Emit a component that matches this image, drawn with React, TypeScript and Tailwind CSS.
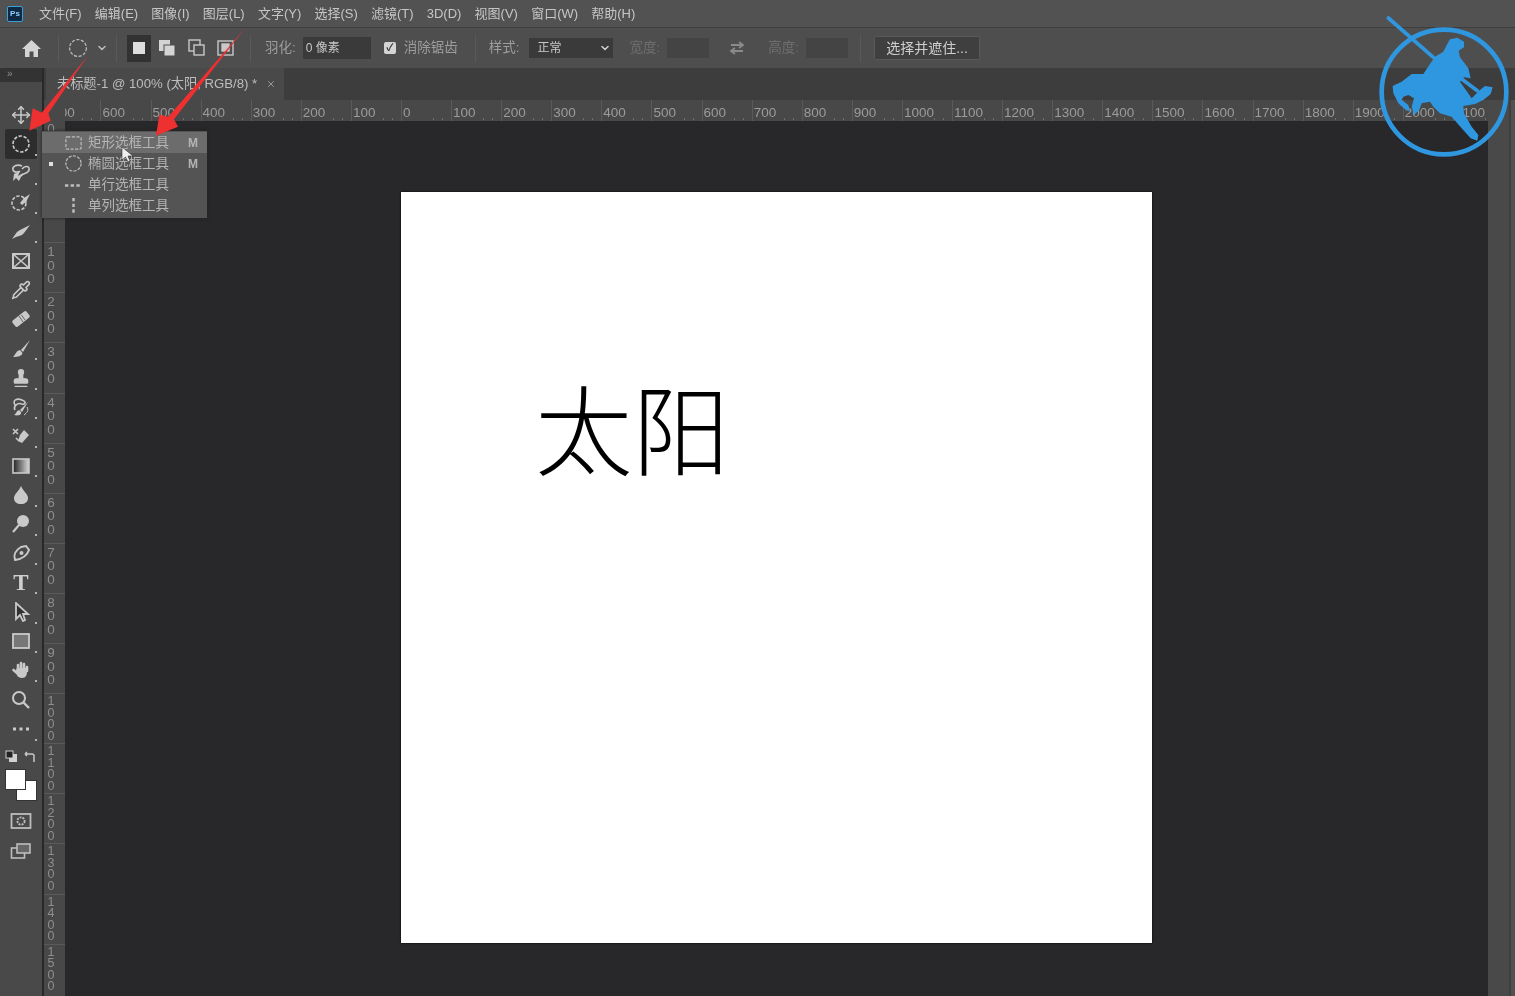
import { ChevronDown, Move, Pipette, Stamp, X } from 'lucide-react'

const MENUS = ['文件(F)', '编辑(E)', '图像(I)', '图层(L)', '文字(Y)', '选择(S)', '滤镜(T)', '3D(D)', '视图(V)', '窗口(W)', '帮助(H)']
const H_LABELS = [700, 600, 500, 400, 300, 200, 100, 0, 100, 200, 300, 400, 500, 600, 700, 800, 900, 1000, 1100, 1200, 1300, 1400, 1500, 1600, 1700, 1800, 1900, 2000, 2100]
const V_LABELS = [200, 100, 0, 100, 200, 300, 400, 500, 600, 700, 800, 900, 1000, 1100, 1200, 1300, 1400, 1500]

const C = '#c9c9c9'

function Svg({ children, size = 20 }: { children: React.ReactNode; size?: number }) {
  return (
    <svg width={size} height={size} viewBox="0 0 20 20" fill="none" stroke={C} strokeWidth="1.6">
      {children}
    </svg>
  )
}

const TOOLS: { key: string; icon: React.ReactNode; corner?: boolean; selected?: boolean }[] = [
  { key: 'move', corner: false, icon: <Move size={20} color={C} strokeWidth={1.8} /> },
  { key: 'ellipse', selected: true, corner: true, icon: <Svg><circle cx="10" cy="10" r="8" strokeDasharray="3.4 1.6" /></Svg> },
  {
    key: 'lasso',
    corner: true,
    icon: (
      <Svg>
        <path d="M11 3 C6 1 1 3 2 7 C3 10 8 9 9 8" />
        <path d="M3 11 L9 8 L7 13 L12 10 L8 18 L5 15 L2 18 Z" fill={C} stroke="none" />
        <path d="M11 6 C14 2 19 3 18 7 C17 11 12 10 10 13" />
      </Svg>
    ),
  },
  {
    key: 'quick',
    corner: true,
    icon: (
      <Svg>
        <circle cx="8" cy="11" r="7" strokeDasharray="3.4 1.6" />
        <path d="M19 2 L13 6 L9 11 L11 13 L15 10 Z" fill={C} stroke="none" />
      </Svg>
    ),
  },
  { key: 'crop', corner: true, icon: <Svg><path d="M1 17 L6 10 L9 8 L19 3 L13 11 L11 13 L5 15 Z" fill={C} stroke="none" /></Svg> },
  { key: 'frame', icon: <Svg><rect x="2" y="3" width="16" height="14" strokeWidth="2" /><path d="M2 3 L18 17 M18 3 L2 17" /></Svg> },
  { key: 'picker', corner: true, icon: <Pipette size={20} color={C} strokeWidth={2} /> },
  {
    key: 'heal',
    corner: true,
    icon: (
      <Svg>
        <rect x="6" y="1" width="8" height="18" rx="2" transform="rotate(52 10 10)" fill={C} stroke="none" />
        <path d="M8 7 L12 13 M10.5 6 L14 11" stroke="#666" strokeWidth="1" />
      </Svg>
    ),
  },
  { key: 'brush', corner: true, icon: <Svg><path d="M19 1 L10 11 L12 13 Z" fill={C} stroke="none" /><path d="M9 11 C5 12 5 15 2 18 C7 18 11 17 11.5 14 Z" fill={C} stroke="none" /></Svg> },
  { key: 'stamp', corner: true, icon: <Stamp size={20} color={C} fill={C} strokeWidth={1.6} /> },
  {
    key: 'history',
    corner: true,
    icon: (
      <Svg>
        <path d="M4 8 C1 3 6 1 11 3 C16 5 14 8 11 7 C6 5 2 10 4 13" />
        <path d="M17 5 L9 13 L11 15 Z" fill={C} stroke="none" />
        <path d="M8 13 C5 14 6 16 3 18 C7 19 11 18 10 15 Z" fill={C} stroke="none" />
        <path d="M16 10 C18 13 16 16 13 18" strokeWidth="1" />
      </Svg>
    ),
  },
  {
    key: 'eraser',
    corner: true,
    icon: (
      <Svg>
        <path d="M2 3 L7 8 M7 3 L2 8" />
        <path d="M9 9 L13 4 L18 9 L11 17 L7 15 Z" fill={C} stroke="none" />
        <path d="M5 12 L8 15" />
      </Svg>
    ),
  },
  {
    key: 'gradient',
    corner: true,
    icon: (
      <svg width="20" height="20" viewBox="0 0 20 20">
        <defs>
          <linearGradient id="grad">
            <stop offset="0" stopColor="#222" />
            <stop offset="1" stopColor="#d8d8d8" />
          </linearGradient>
        </defs>
        <rect x="2" y="3" width="16" height="14" fill="url(#grad)" stroke={C} strokeWidth="1.6" />
      </svg>
    ),
  },
  { key: 'drop', corner: true, icon: <Svg><path d="M10 1 C8 6 3 9 3 13 C3 17 6 19 10 19 C14 19 17 17 17 13 C17 9 12 6 10 1 Z" fill={C} stroke="none" /></Svg> },
  { key: 'dodge', corner: true, icon: <Svg><circle cx="12" cy="7" r="6" fill={C} stroke="none" /><path d="M8 11 L2 18" strokeWidth="2.2" /></Svg> },
  {
    key: 'pen',
    corner: true,
    icon: (
      <Svg>
        <path d="M4 17 C2 12 5 7 10 4 L15 3 L18 7 C16 13 11 16 4 17 Z" strokeWidth="2" />
        <circle cx="10.5" cy="10" r="2" fill={C} stroke="none" />
      </Svg>
    ),
  },
  { key: 'type', corner: true, icon: <span className="font-['Liberation_Serif',serif] text-[23px] font-bold leading-none text-[#cfcfcf]">T</span> },
  { key: 'path', corner: true, icon: <Svg><path d="M5 1 L5 17 L9 13 L12 19 L14 18 L12 12 L17 12 Z" fill="#333" stroke={C} strokeWidth="1.8" /></Svg> },
  { key: 'rect', corner: true, icon: <Svg><rect x="2" y="3" width="16" height="14" fill="#777" strokeWidth="1.8" /></Svg> },
  {
    key: 'hand',
    corner: true,
    icon: (
      <Svg>
        <path d="M5 10 C5 14 6 18 11 18 C15 18 16 15 16 11 V8 H6 Z" fill={C} stroke="none" />
        <path d="M7 10 V5 M10 9 V3 M13 10 V4 M16 11 V7 M6 13 L2.5 10" strokeWidth="2.6" strokeLinecap="round" />
      </Svg>
    ),
  },
  { key: 'zoom', icon: <Svg><circle cx="8" cy="8" r="6" strokeWidth="2" /><path d="M12.5 12.5 L18 18" strokeWidth="2.4" /></Svg> },
  { key: 'more', corner: true, icon: <Svg><path d="M2 10 H5 M8.5 10 H11.5 M15 10 H18" strokeWidth="3" /></Svg> },
]

const FLYOUT = [
  { label: '矩形选框工具', key: 'M', active: true, icon: <rect x="2" y="4" width="16" height="13" rx="1.5" strokeDasharray="3.2 1.6" /> },
  { label: '椭圆选框工具', key: 'M', bullet: true, icon: <circle cx="10" cy="10" r="8" strokeDasharray="3.2 1.4" /> },
  { label: '单行选框工具', icon: <path d="M1 10 H19" strokeWidth="2.6" strokeDasharray="3.6 2.4" /> },
  { label: '单列选框工具', icon: <path d="M10 1 V19" strokeWidth="2.6" strokeDasharray="3.6 2.4" /> },
]

function Tool({ icon, corner, selected }: { icon: React.ReactNode; corner?: boolean; selected?: boolean }) {
  return (
    <div className={`relative mx-[5px] flex h-[29.25px] items-center justify-center ${selected ? 'rounded-[2px] bg-[#2d2d2e]' : ''}`}>
      {icon}
      {corner && <span className="absolute bottom-[3px] right-[0px] h-[2px] w-[2px] bg-[#b5b5b5]" />}
    </div>
  )
}

function Sep({ ml }: { ml: string }) {
  return <div className={`h-[27px] w-px bg-[#5a595a] ${ml}`} />
}

function HRuler() {
  return (
    <div className="h-full min-w-0 flex-1 overflow-hidden">
      <div className="-ml-[14.7px] flex h-full">
        {H_LABELS.map((n, i) => (
          <div key={i} className="flex h-full w-[50.1px] shrink-0 items-end border-l border-[#5b5a5b] pl-[1px] text-[13.5px] leading-[17px] text-[#9b9b9b]">
            <span>{n}</span>
            <span className="mb-[1px] ml-auto mr-[8px] h-[2px] w-px bg-[#6f6f6f]" />
            <span className="mb-[1px] mr-[8px] h-[2px] w-px bg-[#6f6f6f]" />
          </div>
        ))}
      </div>
    </div>
  )
}

function VRuler() {
  return (
    <div className="h-full w-[21px] shrink-0 overflow-hidden bg-[#484848]">
      <div className="-mt-[29px]">
        {V_LABELS.map((n, i) => (
          <div key={i} className="h-[50.1px] border-t border-[#5b5a5b] pt-[2px]">
            <div className={`flex w-[14px] flex-col items-center text-[#8e8e8e] ${n >= 1000 ? 'text-[12.5px]' : 'text-[13.5px]'}`}>
              {String(n)
                .split('')
                .map((d, j) => (
                  <span key={j} className={n >= 1000 ? 'h-[11.5px] leading-[11.5px]' : 'h-[13.5px] leading-[13.5px]'}>
                    {d}
                  </span>
                ))}
            </div>
          </div>
        ))}
      </div>
    </div>
  )
}

function Flyout() {
  return (
    <div className="absolute left-[42px] top-[131px] w-[165px] bg-[#555455] py-[1px] shadow-[0_0_3px_#222]">
      {FLYOUT.map((it) => (
        <div key={it.label} className={`relative flex h-[21.3px] items-center text-[13.5px] text-[#b4b4b4] ${it.active ? 'bg-[#6c6c6c]' : ''}`}>
          {it.bullet && <span className="absolute left-[7px] h-[4px] w-[4px] bg-[#e0e0e0]" />}
          <svg className="ml-[22px] shrink-0" width="19" height="19" viewBox="0 0 20 20" fill="none" stroke="#bdbdbd" strokeWidth="1.3">
            {it.icon}
          </svg>
          <span className="ml-[5px]">{it.label}</span>
          {it.key && <span className="ml-auto mr-[9px] text-[12px] font-bold">{it.key}</span>}
        </div>
      ))}
    </div>
  )
}

export default function App() {
  return (
    <div className="relative flex h-[996px] w-[1515px] flex-col overflow-hidden bg-[#28282a] font-['Liberation_Sans','Noto_Sans_CJK_SC',sans-serif] blur-[0.6px]">
      {/* menu bar */}
      <div className="flex h-[28px] shrink-0 items-center border-b border-[#403f40] bg-[#535253] text-[13px] text-[#c6c6c6]">
        <div className="ml-[7px] flex h-[16px] w-[16px] items-center justify-center rounded-[2px] border border-[#3aa0d8] bg-[#0f2a44] text-[8px] font-bold text-[#8fd0f5]">Ps</div>
        <div className="ml-[16px] flex gap-[13.2px]">
          {MENUS.map((m) => (
            <span key={m}>{m}</span>
          ))}
        </div>
      </div>

      {/* options bar */}
      <div className="flex h-[40px] shrink-0 items-center bg-[#4f4e4f] text-[13.5px] text-[#9d9d9d]">
        <svg className="ml-[22px]" width="19" height="19" viewBox="0 0 19 19" fill="#d4d4d4">
          <path d="M9.5 1 L19 10 H16 V18 H11.5 V12.5 H7.5 V18 H3 V10 H0 Z" />
        </svg>
        <Sep ml="ml-[17px]" />
        <svg className="ml-[9px]" width="20" height="20" viewBox="0 0 20 20" fill="none" stroke="#bdbdbd" strokeWidth="1.2">
          <circle cx="10" cy="10" r="8.4" strokeDasharray="3.2 1.5" />
        </svg>
        <ChevronDown className="ml-[8px]" size={12} color="#bdbdbd" strokeWidth={3} />
        <Sep ml="ml-[8px]" />
        <div className="ml-[10px] flex h-[27px] w-[24px] items-center justify-center bg-[#323233]">
          <div className="h-[12px] w-[12px] bg-[#dddddd]" />
        </div>
        <svg className="ml-[7px]" width="18" height="18" viewBox="0 0 18 18">
          <rect x="1" y="1" width="11" height="11" fill="#d4d4d4" />
          <rect x="6" y="6" width="11" height="11" fill="#d4d4d4" stroke="#4f4e4f" />
        </svg>
        <svg className="ml-[12px]" width="18" height="18" viewBox="0 0 18 18" fill="none" stroke="#c8c8c8" strokeWidth="1.4">
          <rect x="1" y="1" width="11" height="11" />
          <rect x="6" y="6" width="10" height="10" fill="#4f4e4f" />
        </svg>
        <svg className="ml-[11px]" width="18" height="18" viewBox="0 0 18 18" fill="none" stroke="#c8c8c8" strokeWidth="1.4">
          <rect x="1" y="2" width="15" height="14" />
          <rect x="5" y="5" width="7" height="7" fill="#c8c8c8" />
        </svg>
        <Sep ml="ml-[15px]" />
        <span className="ml-[14px]">羽化:</span>
        <div className="ml-[7px] flex h-[22px] w-[68px] items-center bg-[#3b3a3b] pl-[3px] text-[12px] text-[#c8c8c8]">0 像素</div>
        <div className="ml-[13px] flex h-[12px] w-[12px] items-center justify-center rounded-[2px] bg-[#d4d4d4] text-[10px] font-bold leading-none text-[#333]">✓</div>
        <span className="ml-[8px]">消除锯齿</span>
        <Sep ml="ml-[17px]" />
        <span className="ml-[13px]">样式:</span>
        <div className="ml-[9px] flex h-[20px] w-[84px] items-center justify-between bg-[#3b3a3b] pl-[9px] pr-[2px] text-[12px] text-[#c8c8c8]">
          正常
          <ChevronDown size={12} color="#d0d0d0" strokeWidth={3} />
        </div>
        <span className="ml-[17px] text-[#6f6e6f]">宽度:</span>
        <div className="ml-[7px] h-[20px] w-[42px] bg-[#454445]" />
        <svg className="ml-[20px]" width="16" height="16" viewBox="0 0 16 16" fill="none" stroke="#8a8a8a" strokeWidth="1.8">
          <path d="M2 5 H13 M10 2 L14 5 L10 8 M14 11 H3 M6 8 L2 11 L6 14" />
        </svg>
        <span className="ml-[23px] text-[#6f6e6f]">高度:</span>
        <div className="ml-[7px] h-[20px] w-[42px] bg-[#454445]" />
        <Sep ml="ml-[12px]" />
        <div className="ml-[13px] flex h-[24px] w-[106px] items-center justify-center rounded-[2px] border border-[#5a595a] bg-[#403f40] text-[14px] text-[#cfcfcf]">选择并遮住...</div>
      </div>

      <div className="flex min-h-0 flex-1">
        {/* toolbar */}
        <div className="flex w-[42px] shrink-0 flex-col">
          <div className="h-[14px] shrink-0 bg-[#333334] pl-[7px] text-[10px] leading-[11px] text-[#8f8f8f]">»</div>
          <div className="flex-1 bg-[#4a494a] pt-[18px]">
            {TOOLS.map((t) => (
              <Tool key={t.key} icon={t.icon} corner={t.corner} selected={t.selected} />
            ))}
            <div className="ml-[5px] mt-[6px] flex h-[14px] items-center justify-between pr-[6px]">
              <svg width="13" height="13" viewBox="0 0 13 13">
                <rect x="4" y="4" width="8" height="8" fill="#d0d0d0" />
                <rect x="1" y="1" width="7" height="7" fill="#222" stroke="#d0d0d0" />
              </svg>
              <svg width="12" height="12" viewBox="0 0 12 12" fill="none" stroke="#c8c8c8" strokeWidth="1.5">
                <path d="M1 3 H8 Q10 3 10 5 V11 M1 3 L3 1 M1 3 L3 5" />
              </svg>
            </div>
            <div className="relative ml-[5px] mt-[5px] h-[32px] w-[32px]">
              <div className="absolute bottom-0 right-0 h-[21px] w-[21px] border border-[#333] bg-white" />
              <div className="absolute left-0 top-0 h-[21px] w-[21px] border border-[#333] bg-white" />
            </div>
            <div className="mt-[5px] flex h-[30px] items-center justify-center">
              <svg width="22" height="18" viewBox="0 0 22 18" fill="none" stroke="#bdbdbd" strokeWidth="1.8">
                <rect x="1.5" y="2" width="19" height="14" />
                <circle cx="11" cy="9" r="3.6" strokeDasharray="2 1" />
              </svg>
            </div>
            <div className="flex h-[30px] items-center justify-center">
              <svg width="22" height="18" viewBox="0 0 22 18" fill="none" stroke="#bdbdbd" strokeWidth="1.6">
                <rect x="1.5" y="6" width="13" height="10" />
                <rect x="7" y="2" width="13" height="9" fill="#666" />
              </svg>
            </div>
          </div>
        </div>

        {/* document area */}
        <div className="flex min-w-0 flex-1 flex-col pl-[2px]">
          <div className="flex h-[32px] shrink-0 items-stretch bg-[#3e3d3e] pl-[2px]">
            <div className="flex w-[238px] items-center bg-[#4a494a] pl-[11px] text-[13.2px] text-[#bdbdbd]">
              未标题-1 @ 100% (太阳, RGB/8) *
              <X className="ml-[9px]" size={10} color="#a8a8a8" strokeWidth={2} />
            </div>
          </div>
          <div className="flex min-h-0 flex-1">
            <div className="flex min-w-0 flex-1 flex-col">
              <div className="flex h-[21px] shrink-0 bg-[#484848] pl-[21px]">
                <HRuler />
              </div>
              <div className="flex min-h-0 flex-1">
                <VRuler />
                <div className="flex flex-1 justify-center bg-[#28282a] pt-[71px]">
                  <div className="flex h-[751px] w-[751px] items-start bg-white pl-[134px] pt-[174px] font-['Noto_Sans_CJK_SC',serif] text-[97.5px] font-light leading-[120px] text-black shadow-[0_0_2px_#000]">
                    太阳
                  </div>
                </div>
              </div>
            </div>
            {/* collapsed panel strip */}
            <div className="flex w-[27px] shrink-0 bg-[#4a494a]">
              <div className="ml-auto w-[6px] border-l-2 border-[#403f40] bg-[#525152]" />
            </div>
          </div>
        </div>
      </div>

      <Flyout />

      {/* mouse pointer */}
      <svg className="absolute left-[121px] top-[146px]" width="14" height="18" viewBox="0 0 14 18">
        <path d="M1 1 V14 L4.5 11 L7 16 L9 15 L7 10 H12 Z" fill="#eeeeee" stroke="#333" strokeWidth="0.6" />
      </svg>

      {/* red annotation arrows */}
      <svg className="absolute left-0 top-0" width="300" height="160" viewBox="0 0 900 480">
        <path d="M265 165 L145 340 L152 362 L88 392 L98 325 L125 338 Z" fill="#ee3030" />
        <path d="M735 85 L522 358 L534 380 L468 407 L478 344 L505 350 Z" fill="#ee3030" />
      </svg>

      {/* watermark */}
      <svg className="absolute left-[1340px] top-0" width="175" height="170" viewBox="0 0 525 510">
        <circle cx="312" cy="276" r="187" fill="none" stroke="#2f97e0" strokeWidth="14" />
        <path d="M145 54 L280 172 M345 222 L412 272" fill="none" stroke="#2f97e0" strokeWidth="11" strokeLinecap="round" />
        <path
          d="M330 118 L352 113 L372 125 L372 142 L356 152 L360 172 L385 205 L392 235 L372 232 L360 245 L395 295 L420 270 L435 258 L458 262 L452 282 L430 300 L405 312 L370 318 L372 340 L395 380 L415 405 L412 422 L392 415 L365 385 L335 350 L300 340 L280 320 L270 305 L245 310 L238 330 L222 345 L215 320 L222 295 L205 285 L190 290 L185 300 L205 315 L210 335 L195 328 L175 310 L160 280 L158 258 L185 245 L215 222 L250 222 L268 195 L285 170 L310 155 L320 135 Z"
          fill="#2f97e0"
        />
      </svg>
    </div>
  )
}
